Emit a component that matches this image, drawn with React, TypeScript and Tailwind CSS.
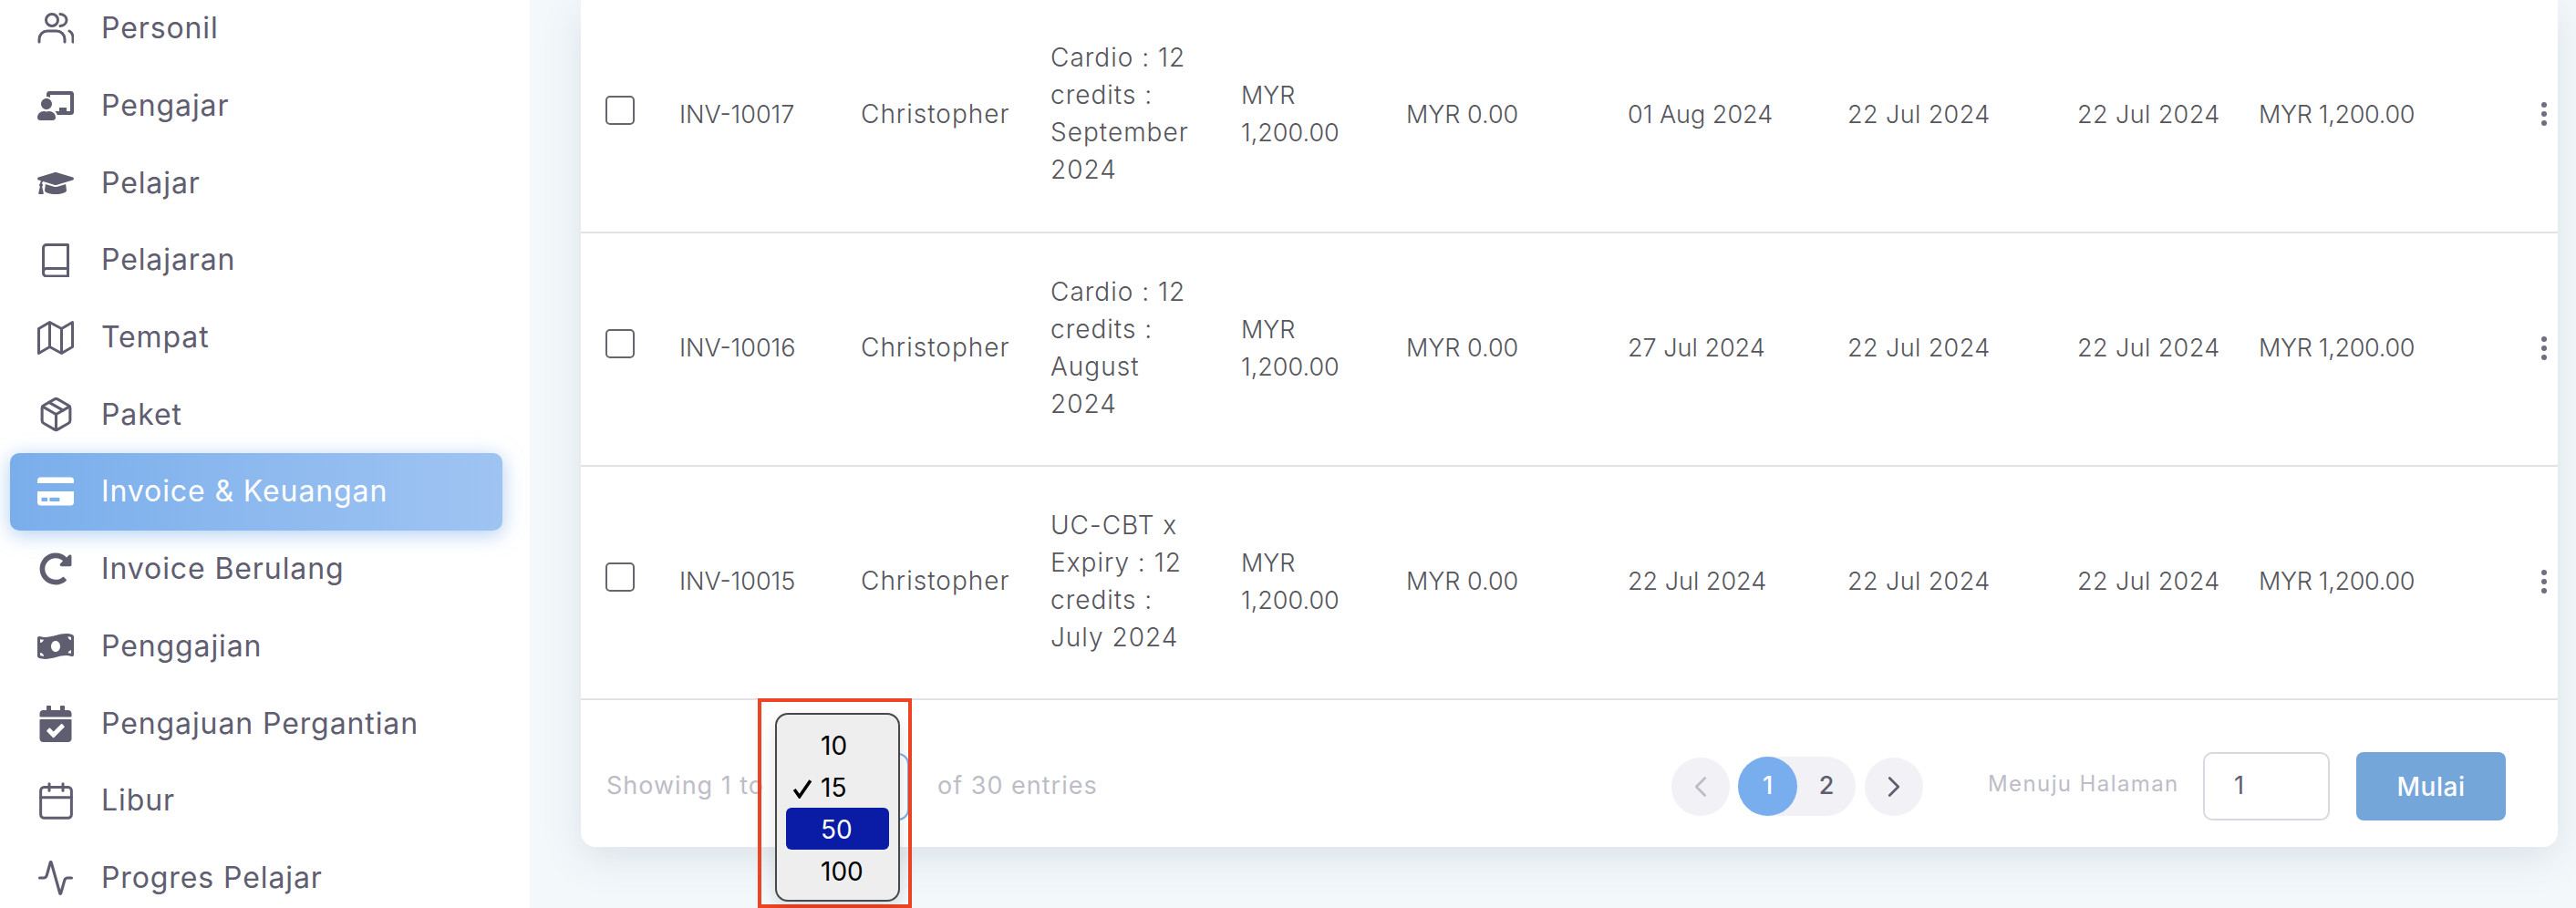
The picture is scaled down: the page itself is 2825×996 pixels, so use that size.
import { Activity, Calendar, ChevronLeft, ChevronRight, Package } from "lucide-react";
import { FaCalendarCheck, FaChalkboardTeacher, FaCreditCard, FaGraduationCap, FaMoneyBillWave, FaRedoAlt } from "react-icons/fa";

function UsersIcon() {
  return (
    <svg width="40" height="36" viewBox="0 0 40 36" fill="none" stroke="currentColor" strokeWidth="3" strokeLinecap="round">
      <circle cx="16" cy="9" r="6.5" />
      <path d="M25 2.500c4 .5 7 3 7 6.500s-3 6-7 6.500" />
      <path d="M2 33v-3a9 9 0 0 1 9-9h10a9 9 0 0 1 9 9v3" />
      <path d="M35 21c2.500 1.500 4 4 4 7v5" />
    </svg>
  );
}

function BookIcon() {
  return (
    <svg width="30" height="37" viewBox="0 0 30 37" fill="none" stroke="currentColor" strokeWidth="3" strokeLinejoin="round">
      <path d="M28.500 1.500H5a3.500 3.500 0 0 0-3.500 3.500v27.500a3.500 3.500 0 0 0 3.500 3.500h23.500z" />
      <path d="M1.500 31a3.500 3.500 0 0 1 3.500-3.500h23.500" />
    </svg>
  );
}

function MapIcon() {
  return (
    <svg width="40" height="38" viewBox="0 0 40 38" fill="none" stroke="currentColor" strokeWidth="3" strokeLinejoin="round">
      <path d="M1.500 9.500v27l12-7 13 7 12-7v-27l-12 7-13-7z" />
      <path d="M13.500 2.500v27M26.500 9.500v27" />
    </svg>
  );
}

const navItems = [
  { label: "Personil", icon: <UsersIcon /> },
  { label: "Pengajar", icon: <FaChalkboardTeacher size={40} /> },
  { label: "Pelajar", icon: <FaGraduationCap size={40} /> },
  { label: "Pelajaran", icon: <BookIcon /> },
  { label: "Tempat", icon: <MapIcon /> },
  { label: "Paket", icon: <Package size={41} strokeWidth={1.8} /> },
  { label: "Invoice & Keuangan", icon: <FaCreditCard size={40} />, active: true },
  { label: "Invoice Berulang", icon: <FaRedoAlt size={36} /> },
  { label: "Penggajian", icon: <FaMoneyBillWave size={40} /> },
  { label: "Pengajuan Pergantian", icon: <FaCalendarCheck size={40} /> },
  { label: "Libur", icon: <Calendar size={45} strokeWidth={1.6} /> },
  { label: "Progres Pelajar", icon: <Activity size={42} strokeWidth={1.8} /> },
];

const rows = [
  { inv: "INV-10017", desc: "Cardio : 12 credits : September 2024", due: "01 Aug 2024", a: "22 Jul 2024", b: "22 Jul 2024" },
  { inv: "INV-10016", desc: "Cardio : 12 credits : August 2024", due: "27 Jul 2024", a: "22 Jul 2024", b: "22 Jul 2024" },
  { inv: "INV-10015", desc: "UC-CBT x Expiry : 12 credits : July 2024", due: "22 Jul 2024", a: "22 Jul 2024", b: "22 Jul 2024" },
];

export default function App() {
  return (
    <div className="relative flex h-[996px] w-[2825px] overflow-hidden bg-[#f3f8fb] [font-family:Inter,sans-serif]">
      <aside className="relative z-10 -mt-[11px] h-[1020px] w-[581px] shrink-0 bg-white pl-[11px] pr-[30px]">
        {navItems.map((item) => (
          <div
            key={item.label}
            className={
              item.active
                ? "flex h-[84.7px] items-center rounded-[10px] bg-gradient-to-r from-[#7aaeeb] to-[#9fc4f2] text-white shadow-[0_4px_22px_rgba(122,174,235,0.6)]"
                : "flex h-[84.7px] items-center text-[#5f5d70]"
            }
          >
            <span className="flex w-[100px] shrink-0 justify-center">{item.icon}</span>
            <span className="text-[32px] leading-none tracking-[0.9px]">{item.label}</span>
          </div>
        ))}
      </aside>

      <main className="min-w-0 flex-1 pl-[56px] pr-[20px]">
        <div className="-mt-[1px] rounded-b-[16px] bg-white shadow-[0_12px_44px_rgba(60,85,105,0.13)]">
          <table className="w-full table-fixed border-collapse text-[27px] font-light leading-[41px] text-[#55555c]">
            <colgroup>
              <col className="w-[108px]" />
              <col className="w-[199px]" />
              <col className="w-[208px]" />
              <col className="w-[209px]" />
              <col className="w-[181px]" />
              <col className="w-[243px]" />
              <col className="w-[241px]" />
              <col className="w-[252px]" />
              <col className="w-[199px]" />
              <col className="w-[223px]" />
              <col className="w-[105px]" />
            </colgroup>
            <tbody>
              {rows.map((r) => (
                <tr key={r.inv} className="h-[256px] border-b-2 border-[#e1e1e8]">
                  <td className="pb-[12px] pl-[27px]">
                    <div className="h-[32px] w-[32px] rounded-[5px] border-2 border-[#66666e]" />
                  </td>
                  <td className="pb-[3px]">{r.inv}</td>
                  <td className="pb-[3px] text-[28px] tracking-[1px]">Christopher</td>
                  <td className="pb-[3px] pr-[39px] text-[28px] tracking-[1px]">{r.desc}</td>
                  <td className="pb-[3px] pr-[40px]">MYR 1,200.00</td>
                  <td className="pb-[3px]">MYR 0.00</td>
                  <td className="pb-[3px]">{r.due}</td>
                  <td className="pb-[3px] tracking-[0.4px]">{r.a}</td>
                  <td className="pb-[3px] tracking-[0.4px]">{r.b}</td>
                  <td className="whitespace-nowrap pb-[3px] tracking-[-0.3px]">MYR 1,200.00</td>
                  <td className="pb-[3px] pr-[7px] text-right">
                    <svg className="ml-auto" width="16" height="30" viewBox="0 0 16 30" fill="#6f6d7e">
                      <circle cx="8" cy="5" r="3" />
                      <circle cx="8" cy="15" r="3" />
                      <circle cx="8" cy="25" r="3" />
                    </svg>
                  </td>
                </tr>
              ))}
            </tbody>
          </table>

          <div className="flex h-[161px] items-center pb-[29px] pl-[28px] pr-[57px] pt-[57px]">
            <span className="w-[173px] whitespace-nowrap text-[27px] tracking-[1px] text-[#bdbdc7]">Showing 1 to</span>
            <div className="ml-[12px] h-[74px] w-[147px] rounded-[12px] border-2 border-[#7aaeeb]" />
            <span className="ml-[31px] whitespace-nowrap text-[27px] tracking-[1px] text-[#bdbdc7]">of 30 entries</span>

            <div className="ml-auto flex items-center">
              <div className="flex h-[64px] w-[64px] items-center justify-center rounded-full bg-[#f1f1f6] text-[#bdbdc7]">
                <ChevronLeft size={38} strokeWidth={1.7} />
              </div>
              <div className="ml-[9px] flex h-[65px] w-[129px] items-center rounded-full bg-[#f1f1f6] text-[27px]">
                <span className="flex h-[65px] w-[65px] items-center justify-center rounded-full bg-[#78adee] font-medium text-white">1</span>
                <span className="flex h-[65px] w-[64px] items-center justify-center font-medium text-[#5f5d70]">2</span>
              </div>
              <div className="ml-[10px] flex h-[64px] w-[64px] items-center justify-center rounded-full bg-[#f1f1f6] text-[#5f5d70]">
                <ChevronRight size={38} strokeWidth={1.7} />
              </div>
              <span className="mb-[6px] ml-[71px] w-[207px] whitespace-nowrap text-[24px] tracking-[1.4px] text-[#bdbdc7]">Menuju Halaman</span>
              <div className="ml-[29px] flex h-[75px] w-[139px] items-center rounded-[10px] border-2 border-[#d8d8e0] pl-[32px] text-[27px] text-[#5f5d70]">1</div>
              <div className="ml-[29px] flex h-[75px] w-[164px] items-center justify-center rounded-[8px] bg-[#75a6da] text-[28px] font-medium tracking-[0.5px] text-white">Mulai</div>
            </div>
          </div>
        </div>
      </main>

      <div className="absolute left-[831px] top-[766px] z-20 h-[230px] w-[169px] border-4 border-[#ee4423]">
        <div className="ml-[15px] mt-[12px] h-[207px] w-[137px] rounded-[14px] border-2 border-[#48484a] bg-[#eeeeee] px-[10px] pt-[10px] text-[28px] leading-[48px] text-black shadow-[0_6px_18px_rgba(0,0,0,0.12)]">
          <div className="h-[46px] pl-[38px]">10</div>
          <div className="relative h-[46px] pl-[38px]">
            <svg className="absolute left-[7px] top-[14px]" width="22" height="22" viewBox="0 0 20 20" fill="none" stroke="#000" strokeWidth="3.2">
              <path d="M2 11l5 7L18 2" />
            </svg>
            15
          </div>
          <div className="h-[46px] rounded-[6px] bg-[#0a1ca5] pl-[38px] text-white">50</div>
          <div className="h-[46px] pl-[38px]">100</div>
        </div>
      </div>
    </div>
  );
}
